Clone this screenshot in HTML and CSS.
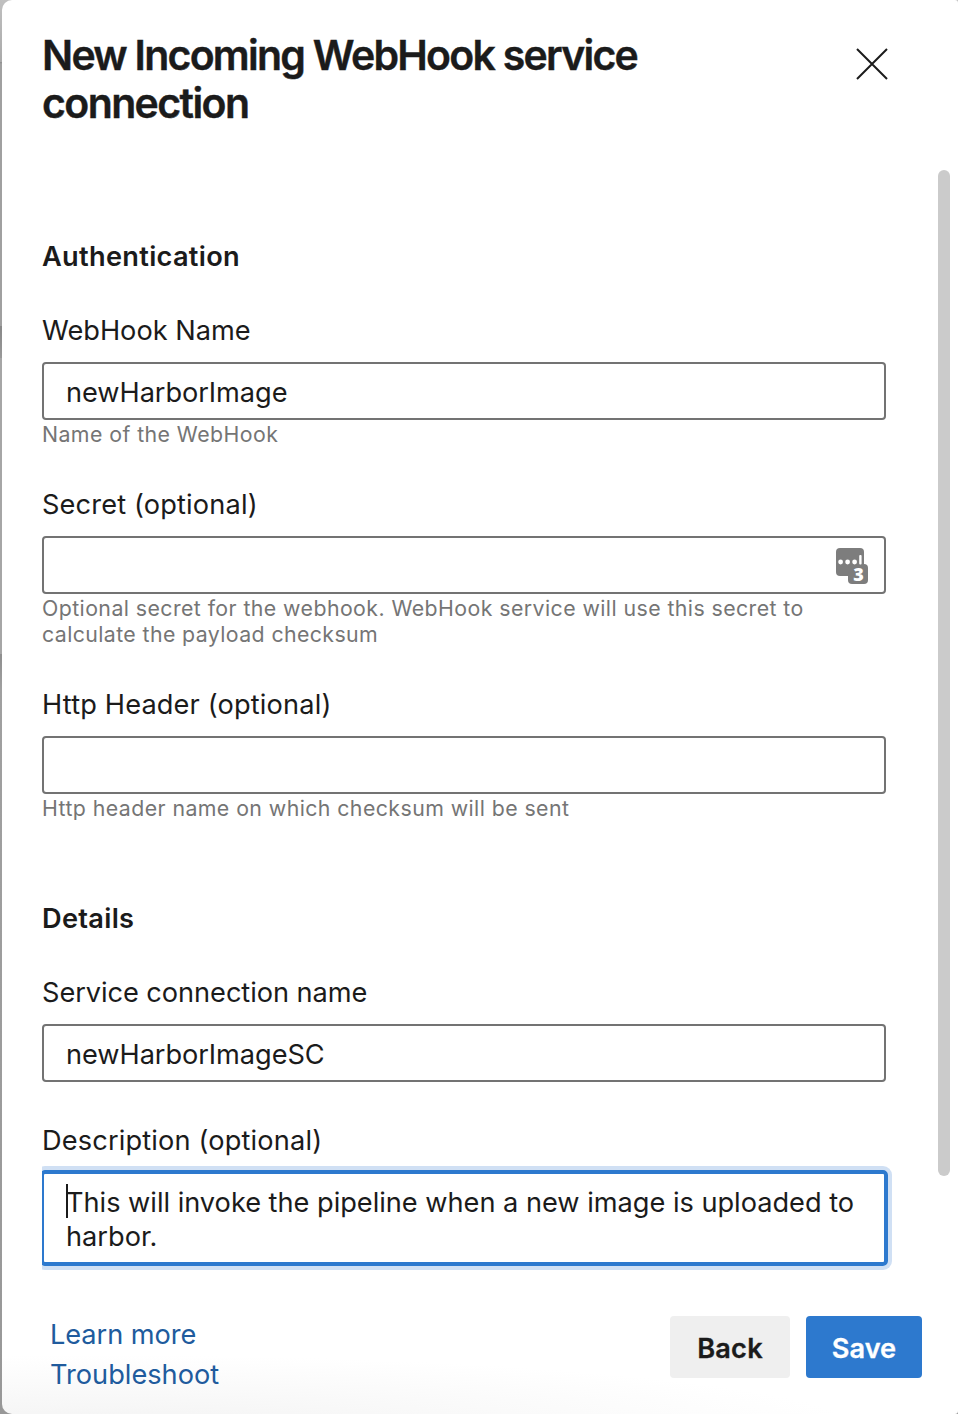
FILE: index.html
```html
<!DOCTYPE html>
<html lang="en">
<head>
<meta charset="utf-8">
<title>New Incoming WebHook service connection</title>
<link rel="stylesheet" href="styles.css">
</head>
<body>
<main class="panel">
  <header class="header">
    <h1 class="title">New Incoming WebHook service<br><span class="title-end">connection</span></h1>
    <svg class="close" width="32" height="32" viewBox="0 0 32 32" role="img" aria-label="Close"><path d="M1 1 31 31M31 1 1 31" fill="none" stroke="#1b1b1b" stroke-width="2"/></svg>
  </header>
  <div class="scroll-area">
    <form class="form">
      <h2 class="section auth"><span>Authentication</span></h2>
      <div class="field name-field">
        <div class="label"><span>WebHook Name</span></div>
        <div class="input"><span class="value">newHarborImage</span></div>
        <p class="help"><span>Name of the WebHook</span></p>
      </div>
      <div class="field secret-field">
        <div class="label"><span class="optional">Secret (optional)</span></div>
        <div class="input secret">
          <svg class="pw" width="32" height="36" viewBox="0 0 32 36">
            <rect width="28" height="28" rx="4" fill="#7d7d7d"/>
            <rect x="12" y="16" width="20" height="20" rx="4" fill="#7d7d7d"/>
            <circle cx="4.6" cy="14" r="2.4" fill="#fff"/><circle cx="11.6" cy="14" r="2.4" fill="#fff"/><circle cx="18.6" cy="14" r="2.4" fill="#fff"/>
            <rect x="23.2" y="7" width="2.4" height="9.5" rx="1" fill="#fff"/>
            <text class="badge-num" x="22.4" y="33">3</text>
          </svg>
        </div>
        <p class="help"><span>Optional secret for the webhook. WebHook service will use this secret to</span><br><span class="help-end">calculate the payload checksum</span></p>
      </div>
      <div class="field http-field">
        <div class="label"><span class="optional">Http Header (optional)</span></div>
        <div class="input"></div>
        <p class="help"><span>Http header name on which checksum will be sent</span></p>
      </div>
      <h2 class="section details"><span>Details</span></h2>
      <div class="field conn-field">
        <div class="label"><span class="value">Service connection name</span></div>
        <div class="input"><span class="value">newHarborImageSC</span></div>
      </div>
      <div class="field">
        <div class="label"><span class="optional">Description (optional)</span></div>
        <div class="clip"><div class="textarea"><i class="caret"></i><span class="message">This will invoke the pipeline when a new image is uploaded to</span><br><span>harbor.</span></div></div>
      </div>
    </form>
    <div class="scrollbar"></div>
  </div>
  <footer class="footer">
    <nav class="links"><a class="value">Learn more</a><a>Troubleshoot</a></nav>
    <div class="buttons"><div class="btn back"><span>Back</span></div><div class="btn save"><span>Save</span></div></div>
  </footer>
</main>
</body>
</html>
```
FILE: styles.css
```css
* { box-sizing: border-box; }
body {
  margin: 0; height: 1414px; padding-left: 2px; overflow: hidden;
  background: linear-gradient(#c0c0c0 0, #aaa 62px, #8c8c8c 62px, #a0a0a0 64px, #a0a0a0 326px, #888 326px, #999 358px, #a6a6a6 358px, #a6a6a6 654px, #8e8e8e 654px, #a0a0a0 690px, #989898 100%);
  font-family: Inter, "Liberation Sans", sans-serif; font-size: 27.2px; color: #1b1b1b;
}
.panel {
  height: 1414px; display: flex; flex-direction: column; border-radius: 10px 3px 3px 10px;
  background: radial-gradient(ellipse 760px 75px at 100px 1430px, #f3f3f3, #fff 100%) #fff;
}
h1, h2, p { margin: 0; }
span, a { white-space: nowrap; }
.header { height: 170px; padding: 31px 70px 0 40px; display: flex; justify-content: space-between; align-items: flex-start; }
.title { font-size: 41px; line-height: 48px; font-weight: 600; letter-spacing: -1.74px; -webkit-text-stroke: 0.4px #1b1b1b; }
.title-end { letter-spacing: -1.6px; }
.close { margin-top: 17px; }
.scroll-area { height: 1106px; display: flex; justify-content: space-between; }
.form { width: 860px; padding: 67px 0 0 40px; }
.section { font-size: 27.2px; line-height: 40px; font-weight: 600; letter-spacing: 0.3px; }
.label { height: 51px; line-height: 40px; }
.optional { letter-spacing: 0.15px; }
.value { letter-spacing: -0.06px; }
.message { letter-spacing: -0.02px; }
.auth { margin-bottom: 34px; }
.input { width: 844px; height: 58px; border: 2px solid #737373; border-radius: 4px; padding: 1px 22px 0; line-height: 56px; }
.help { font-size: 21.3px; line-height: 26px; color: #757575; padding-top: 1px; letter-spacing: 0.43px; }
.help-end { letter-spacing: 0.4px; }
.name-field, .secret-field { margin-bottom: 38px; }
.http-field { margin-bottom: 78px; }
.details { margin-bottom: 34px; }
.conn-field { margin-bottom: 39px; }
.secret { display: flex; justify-content: flex-end; align-items: center; padding-right: 16px; }
.pw { display: block; margin-top: 1px; overflow: visible; }
.badge-num { font: 800 18px "Open Sans", sans-serif; fill: #fff; text-anchor: middle; }
.clip { width: 850px; height: 108px; margin-top: -8px; padding: 6px 0; overflow: hidden; }
.textarea { width: 848px; height: 96px; margin-left: -2px; border: 4px solid #2d79ce; border-radius: 5px; box-shadow: 0 0 0 4px #d0e0f4; padding: 12px 22px 0; line-height: 34px; }
.caret { display: inline-block; width: 2px; height: 34px; margin: -2px -2px 0 0; background: #1b1b1b; vertical-align: top; }
.scrollbar { width: 12px; height: 1006px; margin-right: 8px; border-radius: 6px; background: #cbcbcb; }
.footer { height: 138px; padding: 39px 36px 0 48px; display: flex; justify-content: space-between; }
.links { display: flex; flex-direction: column; line-height: 40px; color: #205b9d; }
.buttons { display: flex; gap: 16px; padding-top: 1px; }
.btn { width: 120px; height: 62px; border-radius: 4px; text-align: center; line-height: 65px; font-weight: 600; letter-spacing: 0.2px; background: #efefef; -webkit-text-stroke: 0.3px; }
.save { width: 116px; background: #2d79ce; color: #fff; letter-spacing: 0; }
```
